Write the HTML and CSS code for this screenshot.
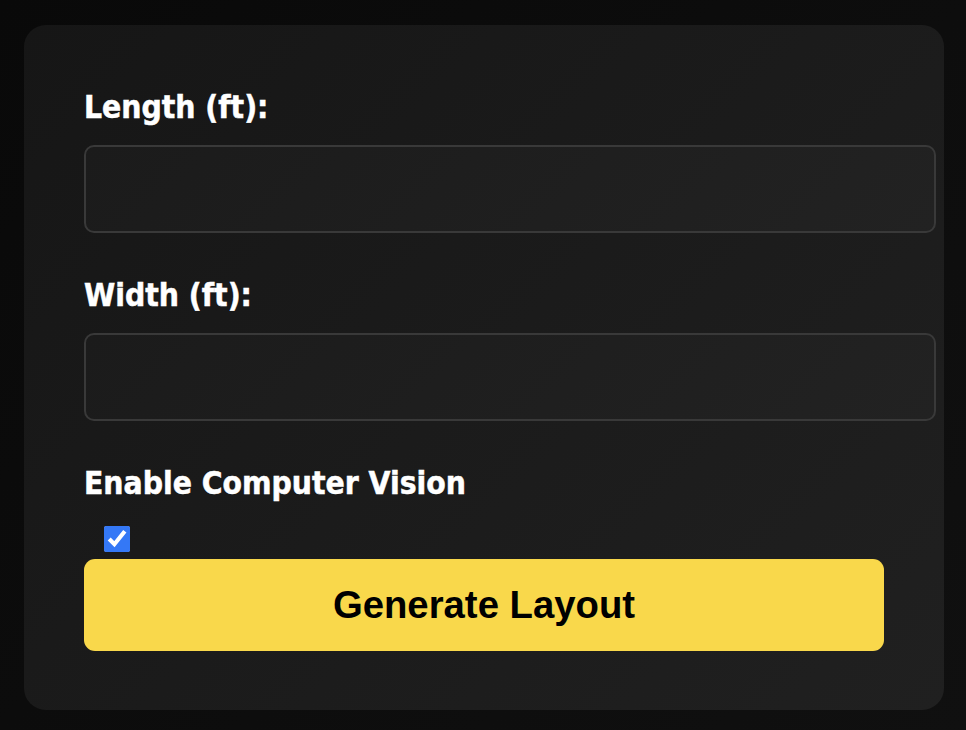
FILE: index.html
```html
<!DOCTYPE html>
<html>
<head>
<meta charset="utf-8">
<link rel="stylesheet" href="styles.css">
</head>
<body>
<div class="card">
  <label class="label" for="len">Length (ft):</label>
  <input class="field" id="len" type="text">
  <label class="label" for="wid">Width (ft):</label>
  <input class="field" id="wid" type="text">
  <label class="label" for="cv">Enable Computer Vision</label>
  <input class="check" id="cv" type="checkbox" checked>
  <button class="btn" type="button">Generate Layout</button>
</div>
</body>
</html>
```
FILE: styles.css
```css
html, body {
  margin: 0;
  padding: 0;
}
body {
  width: 966px;
  height: 730px;
  background: linear-gradient(135deg, #090909 0%, #101010 100%);
  padding: 25px 0 0 24px;
  box-sizing: border-box;
  overflow: hidden;
}
.card {
  width: 920px;
  height: 685px;
  box-sizing: border-box;
  border-radius: 22px;
  background: linear-gradient(135deg, #161616 0%, #1b1b1b 50%, #202020 100%);
  padding: 62px 60px 0 60px;
  display: flex;
  flex-direction: column;
  align-items: flex-start;
}
.label {
  display: block;
  font-family: "DejaVu Sans Condensed", "Noto Sans", sans-serif;
  font-stretch: condensed;
  font-weight: bold;
  font-size: 31.5px;
  line-height: 40px;
  color: #ffffff;
  -webkit-text-stroke: 0.5px #ffffff;
  margin: 0 0 18px 0;
}
.field {
  display: block;
  width: 800px;
  height: 84px;
  padding: 0 24px;
  margin: 0 0 42px 0;
  border: 2px solid #393939;
  border-radius: 10px;
  background: linear-gradient(135deg, #1b1b1b 0%, #222222 100%);
  color: #fff;
  font-size: 24px;
  outline: none;
}
.check {
  width: 26px;
  height: 26px;
  margin: 5px 0 7px 20px;
  accent-color: #3478f6;
}
.btn {
  width: 800px;
  height: 92px;
  border: none;
  border-radius: 11px;
  background: #f9d84b;
  color: #000;
  font-family: "Liberation Sans", Arial, sans-serif;
  font-weight: bold;
  font-size: 38.3px;
  padding: 0;
}
```
